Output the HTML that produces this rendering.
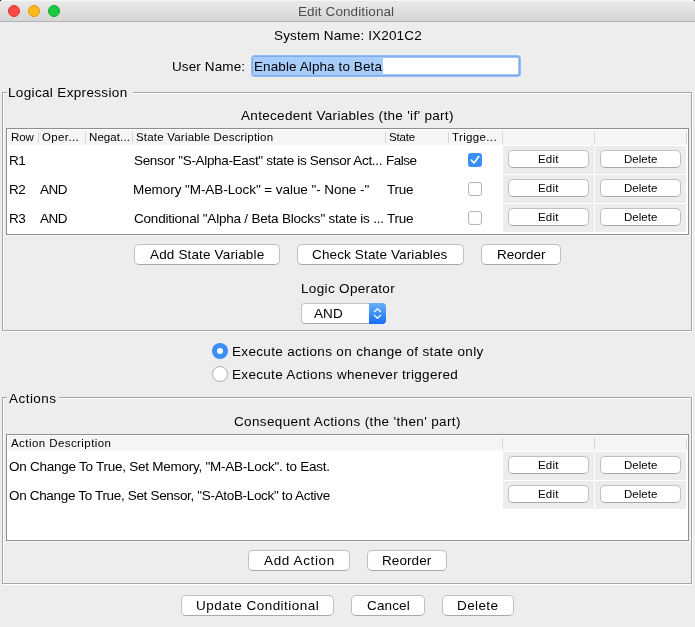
<!DOCTYPE html><html><head><meta charset="utf-8"><style>
html,body{margin:0;padding:0;width:695px;height:627px;overflow:hidden;background:#ededed;}
body{position:relative;font-family:"Liberation Sans",sans-serif;}
.t{position:absolute;white-space:nowrap;will-change:transform;}
</style></head><body>
<div style="position:absolute;left:0px;top:0px;width:2px;height:2px;background:#000;"></div>
<div style="position:absolute;left:693px;top:0px;width:2px;height:2px;background:#000;"></div>
<div style="position:absolute;left:0px;top:0px;width:695px;height:21px;background:linear-gradient(#ebebeb,#d5d5d5);border-top-left-radius:3px;border-top-right-radius:3px;box-shadow:inset 0 1px 0 #f6f6f6;"></div>
<div style="position:absolute;left:0px;top:21px;width:695px;height:1px;background:#b3b3b3;"></div>
<div style="position:absolute;left:8px;top:5px;width:12px;height:12px;box-sizing:border-box;border-radius:50%;background:#fd4a46;border:0.5px solid #e0332e;"></div>
<div style="position:absolute;left:28px;top:5px;width:12px;height:12px;box-sizing:border-box;border-radius:50%;background:#ffbb19;border:0.5px solid #e09c12;"></div>
<div style="position:absolute;left:48px;top:5px;width:12px;height:12px;box-sizing:border-box;border-radius:50%;background:#19cb3f;border:0.5px solid #11a92f;"></div>
<div class="t" style="left:298.40px;top:5.00px;font-size:13.5px;line-height:13.5px;letter-spacing:0.103px;color:#4d4d4d;">Edit Conditional</div>
<div class="t" style="left:273.60px;top:29.00px;font-size:13.5px;line-height:13.5px;letter-spacing:0.150px;color:#000;">System Name: IX201C2</div>
<div class="t" style="left:171.75px;top:60.00px;font-size:13.5px;line-height:13.5px;letter-spacing:0.111px;color:#000;">User Name:</div>
<div style="position:absolute;left:251px;top:55px;width:270px;height:22px;border-radius:4px;background:#92bdf2;"></div>
<div style="position:absolute;left:252px;top:56px;width:268px;height:20px;border-radius:3px;background:#7faceb;"></div>
<div style="position:absolute;left:253px;top:57px;width:266px;height:18px;border-radius:2px;background:#a0c7f6;"></div>
<div style="position:absolute;left:254px;top:58px;width:264px;height:16px;background:#fff;"></div>
<div style="position:absolute;left:253px;top:57px;width:130px;height:18px;background:#a6cdfc;"></div>
<div class="t" style="left:253.60px;top:60.00px;font-size:13.5px;line-height:13.5px;letter-spacing:0.095px;color:#000;">Enable Alpha to Beta</div>
<div style="position:absolute;left:3px;top:93px;width:4px;height:1px;background:#ffffff"></div>
<div style="position:absolute;left:133px;top:93px;width:559px;height:1px;background:#ffffff"></div>
<div style="position:absolute;left:3px;top:93px;width:1px;height:238px;background:#ffffff"></div>
<div style="position:absolute;left:692px;top:92px;width:1px;height:240px;background:#ffffff"></div>
<div style="position:absolute;left:2px;top:331px;width:691px;height:1px;background:#ffffff"></div>
<div style="position:absolute;left:2px;top:92px;width:5px;height:1px;background:#a6a6a6"></div>
<div style="position:absolute;left:133px;top:92px;width:559px;height:1px;background:#a6a6a6"></div>
<div style="position:absolute;left:2px;top:92px;width:1px;height:239px;background:#a6a6a6"></div>
<div style="position:absolute;left:691px;top:92px;width:1px;height:239px;background:#a6a6a6"></div>
<div style="position:absolute;left:2px;top:330px;width:690px;height:1px;background:#a6a6a6"></div>
<div class="t" style="left:8.20px;top:86.00px;font-size:13.5px;line-height:13.5px;letter-spacing:0.344px;color:#000;">Logical Expression</div>
<div class="t" style="left:241.15px;top:109.00px;font-size:13.5px;line-height:13.5px;letter-spacing:0.311px;color:#000;">Antecedent Variables (the 'if' part)</div>
<div style="position:absolute;left:6px;top:128px;width:683px;height:107px;box-sizing:border-box;border:1px solid #8e8e8e;background:#fff;"></div>
<div style="position:absolute;left:8px;top:130px;width:679px;height:15px;background:#f5f5f5;"></div>
<div style="position:absolute;left:6px;top:235px;width:683px;height:1px;background:#f7f7f7;"></div>
<div style="position:absolute;left:38px;top:132px;width:1px;height:11px;background:#d6d6d6;"></div>
<div style="position:absolute;left:85px;top:132px;width:1px;height:11px;background:#d6d6d6;"></div>
<div style="position:absolute;left:132px;top:132px;width:1px;height:11px;background:#d6d6d6;"></div>
<div style="position:absolute;left:385px;top:132px;width:1px;height:11px;background:#d6d6d6;"></div>
<div style="position:absolute;left:448px;top:132px;width:1px;height:11px;background:#d6d6d6;"></div>
<div style="position:absolute;left:502px;top:132px;width:1px;height:11px;background:#d6d6d6;"></div>
<div style="position:absolute;left:594px;top:132px;width:1px;height:11px;background:#d6d6d6;"></div>
<div style="position:absolute;left:686px;top:132px;width:1px;height:11px;background:#d6d6d6;"></div>
<div style="position:absolute;left:503px;top:146px;width:91px;height:28px;background:#ececec;"></div>
<div style="position:absolute;left:595px;top:146px;width:91px;height:28px;background:#ececec;"></div>
<div style="position:absolute;left:503px;top:175px;width:91px;height:28px;background:#ececec;"></div>
<div style="position:absolute;left:595px;top:175px;width:91px;height:28px;background:#ececec;"></div>
<div style="position:absolute;left:503px;top:204px;width:91px;height:28px;background:#ececec;"></div>
<div style="position:absolute;left:595px;top:204px;width:91px;height:28px;background:#ececec;"></div>
<div class="t" style="left:10.65px;top:132.00px;font-size:11.5px;line-height:11.5px;letter-spacing:-0.100px;color:#000;">Row</div>
<div class="t" style="left:41.95px;top:132.00px;font-size:11.5px;line-height:11.5px;letter-spacing:0.367px;color:#000;">Oper...</div>
<div class="t" style="left:88.65px;top:132.00px;font-size:11.5px;line-height:11.5px;letter-spacing:0.086px;color:#000;">Negat...</div>
<div class="t" style="left:135.65px;top:132.00px;font-size:11.5px;line-height:11.5px;letter-spacing:0.200px;color:#000;">State Variable Description</div>
<div class="t" style="left:388.55px;top:132.00px;font-size:11.5px;line-height:11.5px;letter-spacing:-0.150px;color:#000;">State</div>
<div class="t" style="left:452.35px;top:132.00px;font-size:11.5px;line-height:11.5px;letter-spacing:0.356px;color:#000;">Trigge...</div>
<div class="t" style="left:8.50px;top:154.00px;font-size:13.5px;line-height:13.5px;letter-spacing:-0.500px;color:#000;">R1</div>
<div class="t" style="left:133.70px;top:154.00px;font-size:13.5px;line-height:13.5px;letter-spacing:-0.326px;color:#000;">Sensor "S-Alpha-East" state is Sensor Act...</div>
<div class="t" style="left:386.40px;top:154.00px;font-size:13.5px;line-height:13.5px;letter-spacing:-0.500px;color:#000;">False</div>
<div style="position:absolute;left:468px;top:153px;width:14px;height:14px;box-sizing:border-box;border-radius:3px;background:#3b8ef5;"></div>
<svg style="position:absolute;left:468px;top:153px" width="14" height="14"><path d="M3.5 7.2 L6 10 L10.8 3.6" fill="none" stroke="#fff" stroke-width="1.6" stroke-linecap="round" stroke-linejoin="round"/></svg>
<div style="position:absolute;left:508px;top:150px;width:81px;height:18px;box-sizing:border-box;border-radius:5px;background:#fff;border:1px solid #c0c0c0;border-bottom-color:#a8a8a8;"></div>
<div class="t" style="left:537.75px;top:154.00px;font-size:11.5px;line-height:11.5px;letter-spacing:0.183px;color:#000;">Edit</div>
<div style="position:absolute;left:600px;top:150px;width:81px;height:18px;box-sizing:border-box;border-radius:5px;background:#fff;border:1px solid #c0c0c0;border-bottom-color:#a8a8a8;"></div>
<div class="t" style="left:623.75px;top:154.00px;font-size:11.5px;line-height:11.5px;letter-spacing:0.020px;color:#000;">Delete</div>
<div class="t" style="left:8.50px;top:183.00px;font-size:13.5px;line-height:13.5px;letter-spacing:-0.500px;color:#000;">R2</div>
<div class="t" style="left:40.15px;top:183.00px;font-size:13.5px;line-height:13.5px;letter-spacing:-0.500px;color:#000;">AND</div>
<div class="t" style="left:133.20px;top:183.00px;font-size:13.5px;line-height:13.5px;letter-spacing:-0.067px;color:#000;">Memory "M-AB-Lock" = value "- None -"</div>
<div class="t" style="left:387.20px;top:183.00px;font-size:13.5px;line-height:13.5px;letter-spacing:-0.217px;color:#000;">True</div>
<div style="position:absolute;left:468px;top:182px;width:14px;height:14px;box-sizing:border-box;border-radius:3px;background:#fff;border:1px solid #b4b4b4;"></div>
<div style="position:absolute;left:508px;top:179px;width:81px;height:18px;box-sizing:border-box;border-radius:5px;background:#fff;border:1px solid #c0c0c0;border-bottom-color:#a8a8a8;"></div>
<div class="t" style="left:537.75px;top:183.00px;font-size:11.5px;line-height:11.5px;letter-spacing:0.183px;color:#000;">Edit</div>
<div style="position:absolute;left:600px;top:179px;width:81px;height:18px;box-sizing:border-box;border-radius:5px;background:#fff;border:1px solid #c0c0c0;border-bottom-color:#a8a8a8;"></div>
<div class="t" style="left:623.75px;top:183.00px;font-size:11.5px;line-height:11.5px;letter-spacing:0.020px;color:#000;">Delete</div>
<div class="t" style="left:8.50px;top:212.00px;font-size:13.5px;line-height:13.5px;letter-spacing:-0.500px;color:#000;">R3</div>
<div class="t" style="left:40.15px;top:212.00px;font-size:13.5px;line-height:13.5px;letter-spacing:-0.500px;color:#000;">AND</div>
<div class="t" style="left:133.60px;top:212.00px;font-size:13.5px;line-height:13.5px;letter-spacing:-0.211px;color:#000;">Conditional "Alpha / Beta Blocks" state is ...</div>
<div class="t" style="left:387.20px;top:212.00px;font-size:13.5px;line-height:13.5px;letter-spacing:-0.217px;color:#000;">True</div>
<div style="position:absolute;left:468px;top:211px;width:14px;height:14px;box-sizing:border-box;border-radius:3px;background:#fff;border:1px solid #b4b4b4;"></div>
<div style="position:absolute;left:508px;top:208px;width:81px;height:18px;box-sizing:border-box;border-radius:5px;background:#fff;border:1px solid #c0c0c0;border-bottom-color:#a8a8a8;"></div>
<div class="t" style="left:537.75px;top:212.00px;font-size:11.5px;line-height:11.5px;letter-spacing:0.183px;color:#000;">Edit</div>
<div style="position:absolute;left:600px;top:208px;width:81px;height:18px;box-sizing:border-box;border-radius:5px;background:#fff;border:1px solid #c0c0c0;border-bottom-color:#a8a8a8;"></div>
<div class="t" style="left:623.75px;top:212.00px;font-size:11.5px;line-height:11.5px;letter-spacing:0.020px;color:#000;">Delete</div>
<div style="position:absolute;left:134px;top:244px;width:146px;height:21px;box-sizing:border-box;border-radius:5px;background:#fff;border:1px solid #c0c0c0;border-bottom-color:#a8a8a8;"></div>
<div class="t" style="left:150.05px;top:248.00px;font-size:13.5px;line-height:13.5px;letter-spacing:0.153px;color:#000;">Add State Variable</div>
<div style="position:absolute;left:297px;top:244px;width:167px;height:21px;box-sizing:border-box;border-radius:5px;background:#fff;border:1px solid #c0c0c0;border-bottom-color:#a8a8a8;"></div>
<div class="t" style="left:312.30px;top:248.00px;font-size:13.5px;line-height:13.5px;letter-spacing:0.138px;color:#000;">Check State Variables</div>
<div style="position:absolute;left:481px;top:244px;width:80px;height:21px;box-sizing:border-box;border-radius:5px;background:#fff;border:1px solid #c0c0c0;border-bottom-color:#a8a8a8;"></div>
<div class="t" style="left:496.60px;top:248.00px;font-size:13.5px;line-height:13.5px;letter-spacing:-0.050px;color:#000;">Reorder</div>
<div class="t" style="left:300.50px;top:282.00px;font-size:13.5px;line-height:13.5px;letter-spacing:0.338px;color:#000;">Logic Operator</div>
<div style="position:absolute;left:301px;top:303px;width:85px;height:21px;box-sizing:border-box;border-radius:4px;background:#fff;border:1px solid #c4c4c4;border-bottom-color:#a9a9a9;"></div>
<div style="position:absolute;left:369px;top:303px;width:17px;height:21px;border-top-right-radius:4px;border-bottom-right-radius:4px;background:linear-gradient(#6aaefb,#1170f8);"></div>
<svg style="position:absolute;left:369px;top:303px" width="17" height="21"><path d="M5.4 8.7 L8.5 5.7 L11.6 8.7 M5.4 12.3 L8.5 15.3 L11.6 12.3" fill="none" stroke="#fff" stroke-width="1.25" stroke-linecap="round" stroke-linejoin="round"/></svg>
<div class="t" style="left:314.15px;top:307.00px;font-size:13.5px;line-height:13.5px;letter-spacing:0.100px;color:#000;">AND</div>
<div style="position:absolute;left:212px;top:343px;width:16px;height:16px;box-sizing:border-box;border-radius:50%;background:#3b8ef5;"></div>
<div style="position:absolute;left:217px;top:348px;width:6px;height:6px;border-radius:50%;background:#fff;"></div>
<div class="t" style="left:232.40px;top:345.00px;font-size:13.5px;line-height:13.5px;letter-spacing:0.332px;color:#000;">Execute actions on change of state only</div>
<div style="position:absolute;left:212px;top:366px;width:16px;height:16px;box-sizing:border-box;border-radius:50%;background:#fff;border:1px solid #b0b0b0;"></div>
<div class="t" style="left:232.40px;top:368.00px;font-size:13.5px;line-height:13.5px;letter-spacing:0.318px;color:#000;">Execute Actions whenever triggered</div>
<div style="position:absolute;left:3px;top:398px;width:4px;height:1px;background:#ffffff"></div>
<div style="position:absolute;left:59px;top:398px;width:633px;height:1px;background:#ffffff"></div>
<div style="position:absolute;left:3px;top:398px;width:1px;height:186px;background:#ffffff"></div>
<div style="position:absolute;left:692px;top:397px;width:1px;height:188px;background:#ffffff"></div>
<div style="position:absolute;left:2px;top:584px;width:691px;height:1px;background:#ffffff"></div>
<div style="position:absolute;left:2px;top:397px;width:5px;height:1px;background:#a6a6a6"></div>
<div style="position:absolute;left:59px;top:397px;width:633px;height:1px;background:#a6a6a6"></div>
<div style="position:absolute;left:2px;top:397px;width:1px;height:187px;background:#a6a6a6"></div>
<div style="position:absolute;left:691px;top:397px;width:1px;height:187px;background:#a6a6a6"></div>
<div style="position:absolute;left:2px;top:583px;width:690px;height:1px;background:#a6a6a6"></div>
<div class="t" style="left:9.25px;top:392.00px;font-size:13.5px;line-height:13.5px;letter-spacing:0.467px;color:#000;">Actions</div>
<div class="t" style="left:233.80px;top:415.00px;font-size:13.5px;line-height:13.5px;letter-spacing:0.361px;color:#000;">Consequent Actions (the 'then' part)</div>
<div style="position:absolute;left:6px;top:434px;width:683px;height:107px;box-sizing:border-box;border:1px solid #8e8e8e;background:#fff;"></div>
<div style="position:absolute;left:8px;top:436px;width:679px;height:15px;background:#f5f5f5;"></div>
<div style="position:absolute;left:6px;top:541px;width:683px;height:1px;background:#f7f7f7;"></div>
<div style="position:absolute;left:502px;top:438px;width:1px;height:11px;background:#d6d6d6;"></div>
<div style="position:absolute;left:594px;top:438px;width:1px;height:11px;background:#d6d6d6;"></div>
<div style="position:absolute;left:686px;top:438px;width:1px;height:11px;background:#d6d6d6;"></div>
<div style="position:absolute;left:503px;top:452px;width:91px;height:28px;background:#ececec;"></div>
<div style="position:absolute;left:595px;top:452px;width:91px;height:28px;background:#ececec;"></div>
<div style="position:absolute;left:503px;top:481px;width:91px;height:28px;background:#ececec;"></div>
<div style="position:absolute;left:595px;top:481px;width:91px;height:28px;background:#ececec;"></div>
<div class="t" style="left:11.15px;top:438.00px;font-size:11.5px;line-height:11.5px;letter-spacing:0.429px;color:#000;">Action Description</div>
<div class="t" style="left:8.55px;top:460.00px;font-size:13.5px;line-height:13.5px;letter-spacing:-0.252px;color:#000;">On Change To True, Set Memory, "M-AB-Lock". to East.</div>
<div style="position:absolute;left:508px;top:456px;width:81px;height:18px;box-sizing:border-box;border-radius:5px;background:#fff;border:1px solid #c0c0c0;border-bottom-color:#a8a8a8;"></div>
<div class="t" style="left:537.75px;top:460.00px;font-size:11.5px;line-height:11.5px;letter-spacing:0.183px;color:#000;">Edit</div>
<div style="position:absolute;left:600px;top:456px;width:81px;height:18px;box-sizing:border-box;border-radius:5px;background:#fff;border:1px solid #c0c0c0;border-bottom-color:#a8a8a8;"></div>
<div class="t" style="left:623.75px;top:460.00px;font-size:11.5px;line-height:11.5px;letter-spacing:0.020px;color:#000;">Delete</div>
<div class="t" style="left:8.55px;top:489.00px;font-size:13.5px;line-height:13.5px;letter-spacing:-0.332px;color:#000;">On Change To True, Set Sensor, "S-AtoB-Lock" to Active</div>
<div style="position:absolute;left:508px;top:485px;width:81px;height:18px;box-sizing:border-box;border-radius:5px;background:#fff;border:1px solid #c0c0c0;border-bottom-color:#a8a8a8;"></div>
<div class="t" style="left:537.75px;top:489.00px;font-size:11.5px;line-height:11.5px;letter-spacing:0.183px;color:#000;">Edit</div>
<div style="position:absolute;left:600px;top:485px;width:81px;height:18px;box-sizing:border-box;border-radius:5px;background:#fff;border:1px solid #c0c0c0;border-bottom-color:#a8a8a8;"></div>
<div class="t" style="left:623.75px;top:489.00px;font-size:11.5px;line-height:11.5px;letter-spacing:0.020px;color:#000;">Delete</div>
<div style="position:absolute;left:248px;top:550px;width:102px;height:21px;box-sizing:border-box;border-radius:5px;background:#fff;border:1px solid #c0c0c0;border-bottom-color:#a8a8a8;"></div>
<div class="t" style="left:264.35px;top:554.00px;font-size:13.5px;line-height:13.5px;letter-spacing:0.628px;color:#000;">Add Action</div>
<div style="position:absolute;left:367px;top:550px;width:80px;height:21px;box-sizing:border-box;border-radius:5px;background:#fff;border:1px solid #c0c0c0;border-bottom-color:#a8a8a8;"></div>
<div class="t" style="left:381.90px;top:554.00px;font-size:13.5px;line-height:13.5px;letter-spacing:0.083px;color:#000;">Reorder</div>
<div style="position:absolute;left:181px;top:595px;width:153px;height:21px;box-sizing:border-box;border-radius:5px;background:#fff;border:1px solid #c0c0c0;border-bottom-color:#a8a8a8;"></div>
<div class="t" style="left:195.85px;top:599.00px;font-size:13.5px;line-height:13.5px;letter-spacing:0.459px;color:#000;">Update Conditional</div>
<div style="position:absolute;left:351px;top:595px;width:74px;height:21px;box-sizing:border-box;border-radius:5px;background:#fff;border:1px solid #c0c0c0;border-bottom-color:#a8a8a8;"></div>
<div class="t" style="left:366.60px;top:599.00px;font-size:13.5px;line-height:13.5px;letter-spacing:0.140px;color:#000;">Cancel</div>
<div style="position:absolute;left:442px;top:595px;width:72px;height:21px;box-sizing:border-box;border-radius:5px;background:#fff;border:1px solid #c0c0c0;border-bottom-color:#a8a8a8;"></div>
<div class="t" style="left:456.90px;top:599.00px;font-size:13.5px;line-height:13.5px;letter-spacing:0.400px;color:#000;">Delete</div>
</body></html>
